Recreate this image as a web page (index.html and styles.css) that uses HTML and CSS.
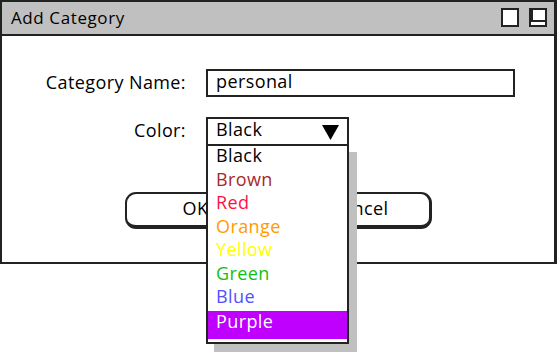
FILE: index.html
```html
<!DOCTYPE html>
<html>
<head>
<meta charset="utf-8">
<link rel="stylesheet" href="styles.css">
</head>
<body>
<div class="window">
  <div class="titlebar">
    <span class="title">Add Category</span>
    <div class="controls">
      <span class="ctl"></span>
      <span class="ctl max"></span>
    </div>
  </div>
  <div class="content">
    <div class="row">
      <span class="label">Category Name:</span>
      <div class="field">personal</div>
    </div>
    <div class="row row-color">
      <span class="label">Color:</span>
      <div class="select-wrap">
        <div class="select">
          <span>Black</span>
          <svg class="arrow" width="17" height="15" viewBox="0 0 17 15"><polygon points="0,0 17,0 8.5,15" fill="#000"/></svg>
        </div>
        <ul class="list">
          <li class="c-black">Black</li>
          <li class="c-brown">Brown</li>
          <li class="c-red">Red</li>
          <li class="c-orange">Orange</li>
          <li class="c-yellow">Yellow</li>
          <li class="c-green">Green</li>
          <li class="c-blue">Blue</li>
          <li class="c-purple selected">Purple</li>
        </ul>
      </div>
    </div>
    <div class="buttons">
      <button class="btn">OK</button>
      <button class="btn">Cancel</button>
    </div>
  </div>
</div>
</body>
</html>
```

FILE: styles.css
```css
* { box-sizing: border-box; }
html, body { margin: 0; padding: 0; background: #fff; }
body {
  width: 557px;
  height: 352px;
  overflow: hidden;
  font-family: "Comic Sans MS", "Open Sans", sans-serif;
  font-size: 18px;
  letter-spacing: 0.4px;
  color: #000;
}
.window {
  width: 557px;
  height: 264px;
  border: 2px solid #222;
  border-right-width: 3px;
  display: flex;
  flex-direction: column;
}
.titlebar {
  height: 34px;
  background: #c0c0c0;
  border-bottom: 2px solid #222;
  display: flex;
  align-items: center;
  justify-content: space-between;
  padding: 0 7px 0 9px;
}
.title { font-size: 17px; letter-spacing: 0.6px; line-height: 1; margin-top: -2px; }
.controls { display: flex; gap: 10px; margin-top: -2px; }
.ctl {
  width: 18px;
  height: 19px;
  border: 2px solid #222;
  background: #fff;
  position: relative;
}
.ctl.max::after {
  content: "";
  position: absolute;
  right: -2px;
  top: -2px;
  width: 12px;
  height: 10px;
  border: 2px solid #222;
}
.content {
  flex: 1;
  padding-top: 33px;
  display: flex;
  flex-direction: column;
}
.row {
  display: flex;
  align-items: center;
  gap: 20px;
}
.row-color { margin-top: 20px; }
.label {
  width: 184px;
  text-align: right;
  margin-top: -3px;
}
.field {
  width: 309px;
  height: 28px;
  border: 2px solid #222;
  padding: 0 8px;
  line-height: 20px;
}
.select-wrap { position: relative; }
.select {
  width: 143px;
  height: 29px;
  border: 2px solid #222;
  display: flex;
  align-items: center;
  justify-content: space-between;
  padding: 0 8px 0 8px;
}
.select span { margin-top: -5px; }
.arrow { margin-top: 1px; }
.list {
  position: absolute;
  left: 0;
  top: 27px;
  width: 143px;
  height: 200px;
  margin: 0;
  padding: 0 0 3px 0;
  list-style: none;
  background: #fff;
  border: 2px solid #222;
  box-shadow: 8px 8px 0 #c0c0c0;
  z-index: 5;
}
.list li {
  height: 23.57px;
  line-height: 19px;
  padding-left: 8px;
}
.list li.selected {
  height: 28px;
  line-height: 21px;
  background: #bf00ff;
  color: #fff;
}
.c-black { color: #000; }
.c-brown { color: #a8282c; }
.c-red { color: #ff1040; }
.c-orange { color: #ff9a00; }
.c-yellow { color: #ffff00; }
.c-green { color: #10c010; }
.c-blue { color: #5050ff; }
.buttons {
  margin-top: 46px;
  display: flex;
  justify-content: center;
  gap: 21px;
}
.btn {
  width: 143px;
  height: 37px;
  border: 2px solid #222;
  border-bottom-width: 4px;
  border-right-width: 3px;
  border-radius: 11px;
  background: #fff;
  font-family: inherit;
  font-size: 18px;
  letter-spacing: 0.4px;
  color: #000;
  padding: 0 0 4px 0;
}
```
